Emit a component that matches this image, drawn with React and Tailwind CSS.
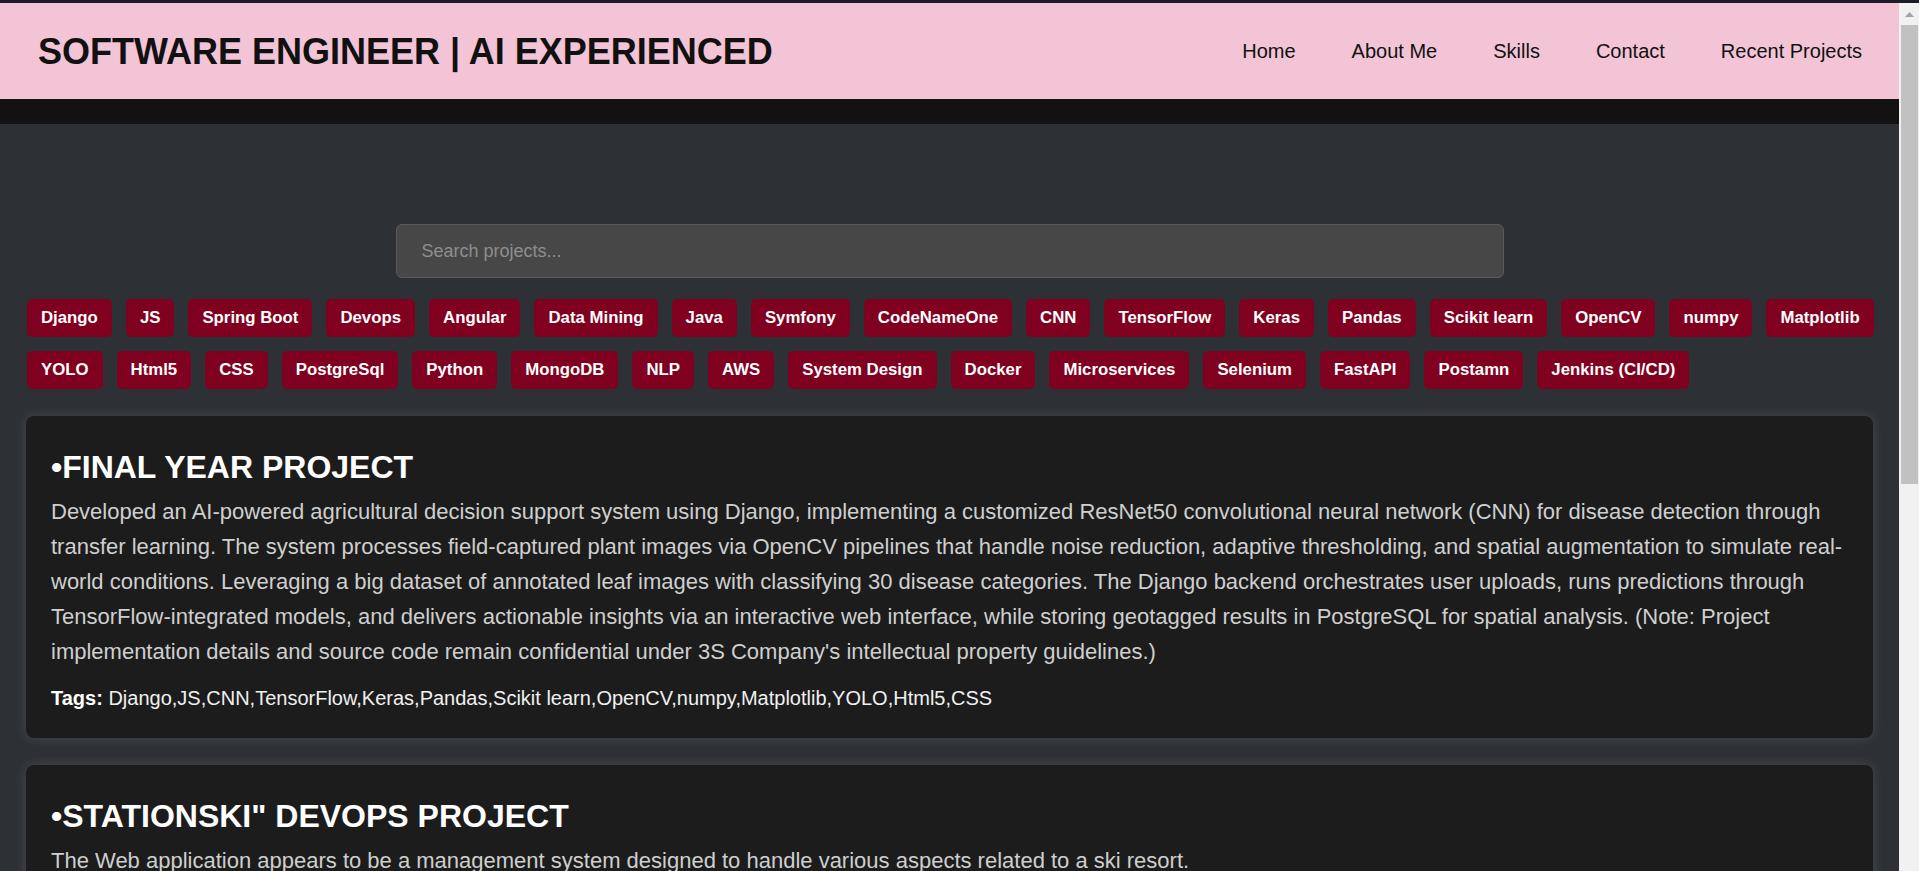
import React, { useState } from "react";

const TAGS = [
  "Django",
  "JS",
  "Spring Boot",
  "Devops",
  "Angular",
  "Data Mining",
  "Java",
  "Symfony",
  "CodeNameOne",
  "CNN",
  "TensorFlow",
  "Keras",
  "Pandas",
  "Scikit learn",
  "OpenCV",
  "numpy",
  "Matplotlib",
  "YOLO",
  "Html5",
  "CSS",
  "PostgreSql",
  "Python",
  "MongoDB",
  "NLP",
  "AWS",
  "System Design",
  "Docker",
  "Microservices",
  "Selenium",
  "FastAPI",
  "Postamn",
  "Jenkins (CI/CD)",
];

const PROJECTS = [
  {
    title: "•FINAL YEAR PROJECT",
    text: "Developed an AI-powered agricultural decision support system using Django, implementing a customized ResNet50 convolutional neural network (CNN) for disease detection through transfer learning. The system processes field-captured plant images via OpenCV pipelines that handle noise reduction, adaptive thresholding, and spatial augmentation to simulate real-world conditions. Leveraging a big dataset of annotated leaf images with classifying 30 disease categories. The Django backend orchestrates user uploads, runs predictions through TensorFlow-integrated models, and delivers actionable insights via an interactive web interface, while storing geotagged results in PostgreSQL for spatial analysis. (Note: Project implementation details and source code remain confidential under 3S Company's intellectual property guidelines.)",
    tags: "Django,JS,CNN,TensorFlow,Keras,Pandas,Scikit learn,OpenCV,numpy,Matplotlib,YOLO,Html5,CSS",
  },
  {
    title: '•STATIONSKI" DEVOPS PROJECT',
    text: "The Web application appears to be a management system designed to handle various aspects related to a ski resort.",
    tags: "Devops,Spring Boot,Angular,Java,Docker,Jenkins (CI/CD)",
  },
];

const NAV = ["Home", "About Me", "Skills", "Contact", "Recent Projects"];

export default function App() {
  const [query, setQuery] = useState("");

  return (
    <div className="h-[871px] overflow-hidden flex flex-col bg-[#2d3136] font-['Liberation_Sans',Arial,sans-serif]">
      {/* window edge */}
      <div className="h-[3px] shrink-0 bg-[#1b1c25]" />

      <div className="flex flex-1 min-h-0">
        <div className="flex-1 min-w-0 flex flex-col">
          {/* Header */}
          <header className="h-[96px] shrink-0 bg-[#f2c4d6] flex items-center justify-between pl-[38px] pr-[37px]">
            <h1 className="text-[36px] font-bold text-[#111] leading-[41px]">
              SOFTWARE ENGINEER | AI EXPERIENCED
            </h1>
            <nav className="flex gap-[56px]">
              {NAV.map((n) => (
                <a key={n} className="text-[20px] text-[#111] leading-[23px] cursor-pointer">
                  {n}
                </a>
              ))}
            </nav>
          </header>
          <div className="h-[25px] shrink-0 bg-[#121212]" />

          {/* Main */}
          <main className="pt-[100px]">
            <div className="flex justify-center">
              <input
                value={query}
                onChange={(e) => setQuery(e.target.value)}
                placeholder="Search projects..."
                className="w-[1108px] h-[54px] rounded-[6px] border border-[#5a5a5a] bg-[#474747] px-[25px] text-[18px] text-white placeholder:text-[#8e8e8e] outline-none"
              />
            </div>

            <div className="mt-[21px] pl-[27px] pr-[10px] flex flex-wrap gap-[14px]">
              {TAGS.map((t) => (
                <button
                  key={t}
                  className="px-[14px] py-[10px] rounded-[5px] bg-[#800020] text-white text-[16.8px] font-bold leading-[18px]"
                >
                  {t}
                </button>
              ))}
            </div>

            <div className="mt-[27px] px-[26px] flex flex-col gap-[27px]">
              {PROJECTS.map((p) => (
                <div
                  key={p.title}
                  className="rounded-[8px] bg-[#1c1c1c] px-[25px] pt-[33px] pb-[24px] shadow-[0_0_12px_rgba(255,255,255,0.13)]"
                >
                  <h2 className="text-[32px] font-bold text-white leading-[37px]">{p.title}</h2>
                  <p className="mt-[8px] text-[22px] leading-[35px] text-[#cfcfcf]">{p.text}</p>
                  <p className="mt-[13px] text-[20px] leading-[32px] text-[#f0f0f0]">
                    <span className="font-bold text-white">Tags:</span> {p.tags}
                  </p>
                </div>
              ))}
            </div>
          </main>
        </div>

        {/* scrollbar */}
        <div className="w-[20px] shrink-0 bg-[#f1f1f1] flex flex-col">
          <div className="h-[22px] flex items-center justify-center">
            <svg width="9" height="5" viewBox="0 0 9 5">
              <path d="M4.5 0 L9 5 L0 5 Z" fill="#a3a3a3" />
            </svg>
          </div>
          <div className="ml-[2px] w-[17px] h-[459px] bg-[#c1c1c1]" />
        </div>
      </div>
    </div>
  );
}
